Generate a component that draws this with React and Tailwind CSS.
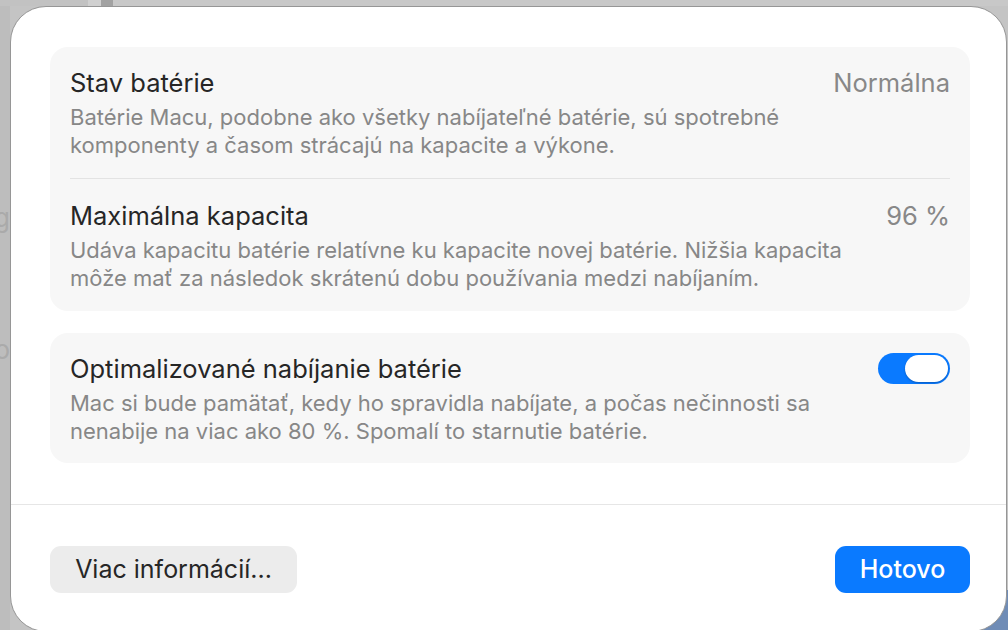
export default function App() {
  const font = { fontFamily: 'Inter, "Noto Sans", sans-serif' };

  return (
    <div className="relative h-[630px] w-[1008px] overflow-hidden bg-[#c4c4c4]" style={font}>
      {/* window behind the sheet */}
      <div className="flex h-[6px]">
        <div className="w-[88px] bg-[#c2c2c2]" />
        <div className="w-[13px] bg-[#d0d0d0]" />
        <div className="w-[12px] bg-[#a2a2a2]" />
        <div className="flex-1 bg-[#c8c8c8]" />
      </div>
      <div className="flex flex-col items-end w-[10px] pt-[196px] text-[26px] leading-[32px] text-[#aaaaaa] bg-[#bdbdbd] h-[624px]">
        <span className="whitespace-nowrap">Konfig</span>
        <span className="mt-[100px] whitespace-nowrap">Hobo</span>
      </div>
      <div className="absolute bottom-0 right-0 h-[40px] w-[30px] bg-[#6f8cb6]" />

      {/* sheet */}
      <div className="absolute left-[10px] top-[6px] flex h-[626px] w-[997px] flex-col rounded-[36px] border border-[#969696] bg-white">
        <div className="flex flex-col gap-[22px] pl-[39px] pr-[36px] pt-[40px]">
          <div className="rounded-[18px] bg-[#f7f7f7]">
            <div className="flex items-start justify-between px-[20px] pt-[20px] pb-[19px]">
              <div>
                <div className="text-[25.5px] leading-[32px] text-[#262626]">Stav batérie</div>
                <div className="mt-[4px] text-[22px] leading-[28px] text-[#878787]">
                  <div>Batérie Macu, podobne ako všetky nabíjateľné batérie, sú spotrebné</div>
                  <div>komponenty a časom strácajú na kapacite a výkone.</div>
                </div>
              </div>
              <div className="text-[25.5px] leading-[32px] text-[#888888]">Normálna</div>
            </div>
            <div className="mx-[20px] h-px bg-[#e3e3e3]" />
            <div className="flex items-start justify-between px-[20px] pt-[21px] pb-[19px]">
              <div>
                <div className="text-[25.5px] leading-[32px] text-[#262626]">Maximálna kapacita</div>
                <div className="mt-[4px] text-[22px] leading-[28px] text-[#878787]">
                  <div>Udáva kapacitu batérie relatívne ku kapacite novej batérie. Nižšia kapacita</div>
                  <div>môže mať za následok skrátenú dobu používania medzi nabíjaním.</div>
                </div>
              </div>
              <div className="text-[25.5px] leading-[32px] text-[#888888]">96 %</div>
            </div>
          </div>

          <div className="rounded-[18px] bg-[#f7f7f7]">
            <div className="flex items-start justify-between px-[20px] pt-[20px] pb-[18px]">
              <div>
                <div className="text-[25.5px] leading-[32px] text-[#262626]">Optimalizované nabíjanie batérie</div>
                <div className="mt-[4px] text-[22px] leading-[28px] text-[#878787]">
                  <div>Mac si bude pamätať, kedy ho spravidla nabíjate, a počas nečinnosti sa</div>
                  <div>nenabije na viac ako 80 %. Spomalí to starnutie batérie.</div>
                </div>
              </div>
              <div className="flex h-[31px] w-[72px] items-center justify-end rounded-full bg-[#0a7aff] px-[2px]">
                <div className="h-[27px] w-[43px] rounded-full bg-white shadow-[0_1px_2px_rgba(0,0,0,0.25)]" />
              </div>
            </div>
          </div>
        </div>

        <div className="mt-[41px] h-px bg-[#e6e6e6]" />

        <div className="flex items-start justify-between pl-[39px] pr-[36px] pt-[41px]">
          <button className="h-[47px] w-[247px] rounded-[11px] bg-[#ececec] text-[25px] text-[#262626]">
            Viac informácií...
          </button>
          <button className="h-[47px] w-[135px] rounded-[11px] bg-[#0a7aff] text-[25px] font-medium text-white">
            Hotovo
          </button>
        </div>
      </div>
    </div>
  );
}
